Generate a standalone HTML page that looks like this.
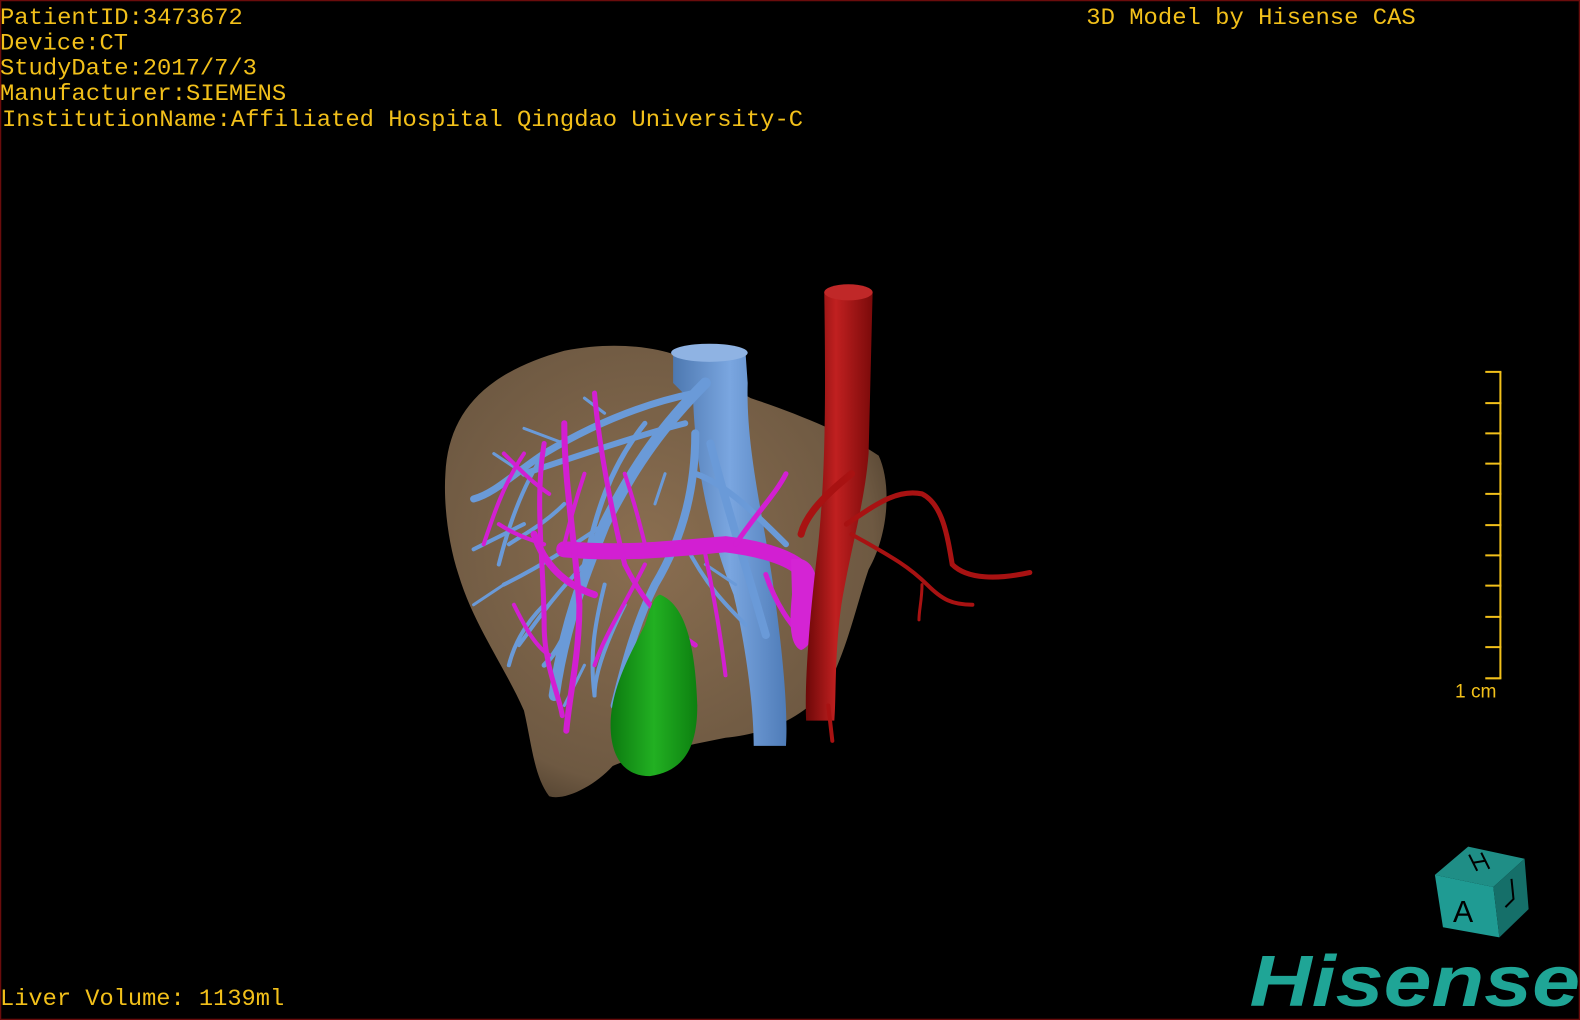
<!DOCTYPE html>
<html><head><meta charset="utf-8">
<style>
html,body{margin:0;padding:0;background:#000;}
body{width:1580px;height:1020px;overflow:hidden;}
svg{display:block}
.t{font-family:"Liberation Mono",monospace;font-size:23px;fill:#f2c01a;}
</style></head>
<body>
<svg width="1580" height="1020" viewBox="0 0 1568 1012" preserveAspectRatio="none" xmlns="http://www.w3.org/2000/svg">
<defs>
<radialGradient id="lv" cx="0.45" cy="0.45" r="0.65">
<stop offset="0" stop-color="#8a6e50"/><stop offset="0.8" stop-color="#6e5942"/><stop offset="1" stop-color="#463828"/></radialGradient>
<linearGradient id="ao" x1="0" x2="1"><stop offset="0" stop-color="#6d0808"/><stop offset="0.45" stop-color="#c02020"/><stop offset="1" stop-color="#7a0a0a"/></linearGradient>
<linearGradient id="iv" x1="0" x2="1"><stop offset="0" stop-color="#4d78b0"/><stop offset="0.5" stop-color="#7aa6e0"/><stop offset="1" stop-color="#4f7cb8"/></linearGradient>
<linearGradient id="gb" x1="0" x2="1"><stop offset="0" stop-color="#0c7a10"/><stop offset="0.5" stop-color="#22b022"/><stop offset="1" stop-color="#0d8010"/></linearGradient>
</defs>
<rect x="0" y="0" width="1568" height="1012" fill="#000"/>
<rect x="0.5" y="0.5" width="1567" height="1011" fill="none" stroke="#6a0c0c" stroke-width="1.5"/>

<!-- liver -->
<path d="M442,470 C445,410 480,370 560,348 C610,338 650,345 670,352 L745,395 C790,410 840,430 872,452 C885,480 882,530 862,565 C850,600 842,640 822,680 C800,712 760,728 720,732 L690,738 C660,745 625,752 608,760 C590,780 560,795 545,790 C530,770 528,740 520,705 C500,660 470,620 455,570 C445,540 440,500 442,470 Z" fill="url(#lv)"/>

<!-- IVC -->
<path d="M668,350 L740,352 L742,380 C740,450 760,520 770,600 C778,660 782,710 780,740 L748,740 C748,700 740,640 728,590 C700,520 690,450 688,400 L668,380 Z" fill="url(#iv)"/>
<ellipse cx="704" cy="350" rx="38" ry="9" fill="#8fb3e3"/>

<!-- blue hepatic branches -->
<g stroke="#6a9ad8" stroke-linecap="round" fill="none">
<path d="M700,380 C660,420 630,460 600,520 C580,570 560,620 550,690" stroke-width="11"/>
<path d="M690,390 C640,400 590,420 540,450 C510,470 490,490 470,495" stroke-width="7"/>
<path d="M680,420 C640,430 580,450 520,470" stroke-width="6"/>
<path d="M690,430 C690,480 680,530 650,580 C630,620 620,660 610,700" stroke-width="8"/>
<path d="M705,440 C720,500 740,560 760,630" stroke-width="8"/>
<path d="M690,470 C720,480 750,510 780,540" stroke-width="6"/>
<path d="M640,420 C600,470 590,520 580,560 C575,600 560,640 540,660" stroke-width="5"/>
<path d="M600,520 C570,540 540,560 500,580" stroke-width="4"/>
<path d="M580,560 C550,590 530,620 515,640" stroke-width="4"/>
<path d="M540,450 C520,480 505,520 495,560" stroke-width="4"/>
<path d="M620,600 C600,640 590,670 590,690" stroke-width="4"/>
<path d="M680,540 C700,580 720,600 740,620" stroke-width="4"/>
<path d="M560,440 L520,425 M600,410 L580,395 M520,470 L490,450 M500,580 L470,600 M700,560 L730,580 M580,660 L560,700 M660,470 L650,500" stroke-width="3"/>
<path d="M520,520 C500,530 480,540 470,545 M540,600 C520,620 510,640 505,660 M600,580 C590,620 585,650 590,690 M560,500 C540,520 520,530 505,540" stroke-width="4"/>
</g>

<!-- magenta portal -->
<g stroke="#d21fd2" stroke-linecap="round" fill="none">
<path d="M560,545 C620,550 660,545 720,540 C760,545 790,555 800,570" stroke-width="16"/>
<path d="M530,530 C540,560 560,580 590,590" stroke-width="7"/>
<path d="M560,420 C560,480 570,530 575,600 C575,650 565,690 562,725" stroke-width="6"/>
<path d="M540,440 C530,500 540,560 540,620 C540,660 555,690 558,710" stroke-width="5"/>
<path d="M590,390 C595,450 610,520 620,560" stroke-width="5"/>
<path d="M520,450 C500,480 490,510 480,540" stroke-width="4"/>
<path d="M620,560 C640,600 660,620 690,640" stroke-width="5"/>
<path d="M700,550 C710,600 715,630 720,670" stroke-width="4"/>
<path d="M730,540 C750,510 770,490 780,470" stroke-width="5"/>
<path d="M640,560 C620,600 600,630 590,660" stroke-width="4"/>
<path d="M510,600 C520,620 530,640 545,650" stroke-width="4"/>
<path d="M760,570 C770,600 785,620 795,630" stroke-width="5"/>
<path d="M500,450 C520,470 530,480 545,490 M495,520 C510,530 525,535 540,540 M580,470 C570,500 565,520 560,540 M620,470 C630,500 635,520 640,540" stroke-width="4"/>
</g>
<path d="M785,555 C805,550 815,570 810,600 C810,620 808,640 795,645 C782,640 784,610 786,590 Z" fill="#d424d4"/>

<!-- gallbladder -->
<path d="M655,590 C680,600 690,640 692,700 C692,740 680,765 645,770 C615,770 605,745 606,715 C608,680 625,650 640,620 C645,605 648,592 655,590 Z" fill="url(#gb)"/>

<!-- aorta -->
<path d="M818,290 L866,290 L862,450 C858,500 845,540 835,600 C828,650 830,690 828,715 L800,715 C798,670 805,600 812,540 C818,480 820,420 818,290 Z" fill="url(#ao)"/>
<ellipse cx="842" cy="290" rx="24" ry="8" fill="#c02828"/>
<g stroke="#a81212" fill="none" stroke-linecap="round">
<path d="M845,470 C820,490 800,510 795,530" stroke-width="7"/>
<path d="M840,520 C870,500 890,485 915,490 C935,500 940,530 945,560 C960,575 990,575 1022,568" stroke-width="5"/>
<path d="M845,530 C880,550 900,560 920,580 C935,595 945,600 965,600" stroke-width="4"/>
<path d="M915,580 C915,595 912,605 912,615" stroke-width="3"/>
<path d="M822,700 L826,735" stroke-width="4"/>
</g>

<!-- text -->
<text class="t" x="0" y="24" textLength="241" lengthAdjust="spacingAndGlyphs">PatientID:3473672</text>
<text class="t" x="0" y="49" textLength="127" lengthAdjust="spacingAndGlyphs">Device:CT</text>
<text class="t" x="0" y="74" textLength="255" lengthAdjust="spacingAndGlyphs">StudyDate:2017/7/3</text>
<text class="t" x="0" y="99" textLength="284" lengthAdjust="spacingAndGlyphs">Manufacturer:SIEMENS</text>
<text class="t" x="2" y="125" textLength="795" lengthAdjust="spacingAndGlyphs">InstitutionName:Affiliated Hospital Qingdao University-C</text>
<text class="t" x="1078" y="24" textLength="327" lengthAdjust="spacingAndGlyphs">3D Model by Hisense CAS</text>
<text class="t" x="0" y="997" textLength="282" lengthAdjust="spacingAndGlyphs">Liver Volume: 1139ml</text>

<!-- ruler -->
<g stroke="#f2c01a" stroke-width="2">
<line x1="1489" y1="369" x2="1489" y2="673"/>
<line x1="1474" y1="369" x2="1490" y2="369"/><line x1="1474" y1="400" x2="1490" y2="400"/>
<line x1="1474" y1="430" x2="1490" y2="430"/><line x1="1474" y1="460" x2="1490" y2="460"/>
<line x1="1474" y1="490" x2="1490" y2="490"/><line x1="1474" y1="521" x2="1490" y2="521"/>
<line x1="1474" y1="551" x2="1490" y2="551"/><line x1="1474" y1="581" x2="1490" y2="581"/>
<line x1="1474" y1="612" x2="1490" y2="612"/><line x1="1474" y1="642" x2="1490" y2="642"/>
<line x1="1474" y1="673" x2="1490" y2="673"/>
</g>
<text x="1444" y="692" font-family="Liberation Sans,sans-serif" font-size="19" fill="#f2c01a">1 cm</text>

<!-- cube -->
<polygon points="1424,868 1457,840 1513,852 1482,880" fill="#1f8e86"/>
<polygon points="1424,868 1482,880 1488,930 1432,920" fill="#1f9b93"/>
<polygon points="1482,880 1513,852 1517,902 1488,930" fill="#156f69"/>
<text x="1442" y="915" font-family="Liberation Sans,sans-serif" font-size="30" fill="#000">A</text>
<path d="M1458,848 L1466,864 M1470,846 L1478,862 M1462,856 L1474,854" stroke="#000" stroke-width="2"/>
<path d="M1500,872 L1502,892 L1494,900" stroke="#000" stroke-width="2" fill="none"/>

<!-- logo -->
<text x="1240" y="998" font-family="Liberation Sans,sans-serif" font-weight="bold" font-style="italic" font-size="72" fill="#1fa596" textLength="328" lengthAdjust="spacingAndGlyphs">Hisense</text>
</svg>
</body></html>
